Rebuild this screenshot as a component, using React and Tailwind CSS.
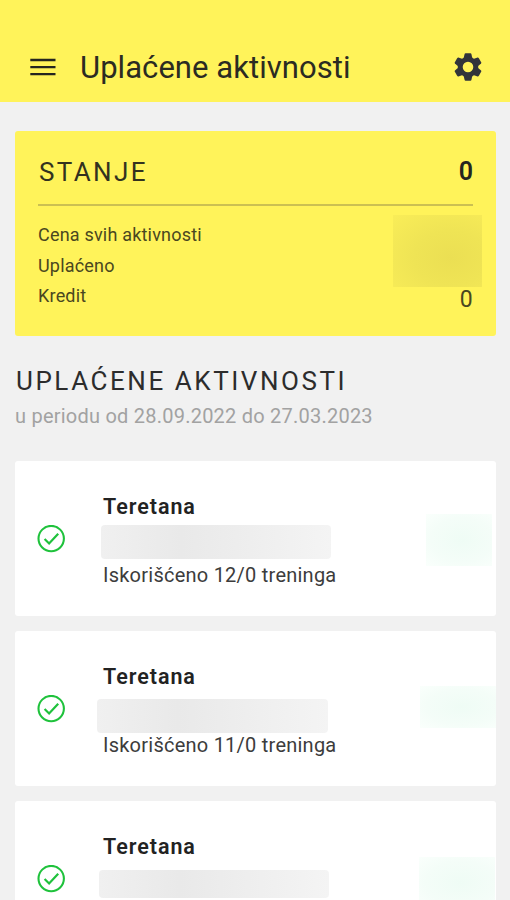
import React from 'react';

const activities = [
  {
    id: 1,
    name: 'Teretana',
    used: 'Iskorišćeno 12/0 treninga',
    mask: 'left-[86px] top-[64px] h-[34px] w-[230px]',
    price: 'left-[411px] top-[53px] h-[52px] w-[66px]',
  },
  {
    id: 2,
    name: 'Teretana',
    used: 'Iskorišćeno 11/0 treninga',
    mask: 'left-[82px] top-[68px] h-[34px] w-[231px]',
    price: 'left-[405px] top-[55px] h-[42px] w-[76px]',
  },
  {
    id: 3,
    name: 'Teretana',
    used: '',
    mask: 'left-[84px] top-[69px] h-[28px] w-[230px]',
    price: 'left-[404px] top-[56px] h-[52px] w-[76px]',
  },
];

const MenuIcon = () => (
  <svg className="h-[18px] w-[26px]" viewBox="0 0 26 18" stroke="#25251f" strokeWidth="2.3">
    <path d="M0.3 2h25.2M0.3 9.1h25.2M0.3 16.2h25.2" />
  </svg>
);

const CheckIcon = () => (
  <svg className="h-7 w-7 shrink-0" viewBox="0 0 28 28" fill="none" stroke="#1fc23c" strokeWidth="2.1">
    <circle cx="14.2" cy="13.6" r="12.7" />
    <path strokeWidth="2.2" d="M7.6 14l4.5 4.5 9.1-9.8" />
  </svg>
);

const GearIcon = () => (
  <svg className="h-7 w-7" viewBox="-14 -14 28 28" fill="#32343a">
    <circle r="7.8" fill="none" stroke="#32343a" strokeWidth="5" />
    {[0, 60, 120, 180, 240, 300].map((angle) => (
      <path
        key={angle}
        transform={`rotate(${angle})`}
        d="M-4.4-8.6L-3.4-13.1Q-3.2-13.8-2.5-13.8H2.5Q3.2-13.8 3.4-13.1L4.4-8.6Z"
      />
    ))}
  </svg>
);

const Header = () => (
  <header className="flex h-[102px] items-end justify-between bg-[#fff35a] pr-7 pl-[30px]">
    <div className="flex h-[70px] items-center">
      <button aria-label="Meni">
        <MenuIcon />
      </button>
      <h1 className="mt-0.5 ml-[24px] text-[31px] leading-9 tracking-[0.05px] text-[#2b2b22]">
        Uplaćene aktivnosti
      </h1>
    </div>
    <button className="flex h-[70px] items-center" aria-label="Podešavanja">
      <GearIcon />
    </button>
  </header>
);

const Balance = () => (
  <section className="relative mt-[29px] h-[205px] rounded-[3px] bg-[#fff35a] px-[23px] text-[#25251f]">
    <div className="flex h-[75px] items-center justify-between border-b-2 border-[#cbc052] pt-[9px]">
      <h2 className="pl-px text-[26px] tracking-[2.4px] text-[#33321f]">STANJE</h2>
      <span className="text-[25px] font-semibold">0</span>
    </div>
    <dl className="mt-[14px] text-[18px] leading-[30.5px] tracking-[0.2px] text-[#4a471f]">
      <dt>Cena svih aktivnosti</dt>
      <dt>Uplaćeno</dt>
      <div className="flex justify-between">
        <dt>Kredit</dt>
        <dd className="pt-1 text-[23px]">0</dd>
      </div>
    </dl>
    {/* Hidden amounts */}
    <div className="absolute top-[84px] left-[378px] h-[72px] w-[89px] bg-[radial-gradient(ellipse_at_65%_60%,#ebdf53_0%,#efe455_45%,#f9ed58_100%)]" />
  </section>
);

const ActivityCard = ({ activity }) => (
  <li className="relative flex h-[155px] items-center rounded-[3px] bg-white pl-[22px]">
    <CheckIcon />
    <div className="mt-[5px] ml-[38px] flex flex-col gap-[44px] text-[20px] leading-6 text-[#222]">
      <h3 className="text-[21.5px] font-semibold tracking-[0.95px]">{activity.name}</h3>
      <p className="h-6 tracking-[0.24px] text-[#3c3c3c]">{activity.used}</p>
    </div>
    {/* Hidden date and price */}
    <div className={`absolute rounded-sm bg-linear-to-r from-[#f0f0f0] via-[#e9e9e9] via-35% to-[#f4f4f4] ${activity.mask}`} />
    <div className={`absolute bg-[radial-gradient(ellipse_at_55%_50%,#effcf5_0%,#f4fdf8_60%,#fafffc_100%)] ${activity.price}`} />
  </li>
);

const App = () => {
  return (
    <div className="h-[900px] w-[510px] overflow-hidden bg-[#f1f1f1] font-['Roboto',sans-serif]">
      <Header />
      <main className="pr-[14px] pl-[15px]">
        <Balance />
        <div className="mt-[29px] h-24">
          <h2 className="pl-px text-[26px] leading-8 tracking-[2.55px] text-[#2c2c2c]">UPLAĆENE AKTIVNOSTI</h2>
          <p className="mt-[7px] text-[20px] leading-6 tracking-[0.23px] text-[#a2a2a2]">
            u periodu od 28.09.2022 do 27.03.2023
          </p>
        </div>
        <ul className="flex flex-col gap-[15px]">
          {activities.map((activity) => (
            <ActivityCard key={activity.id} activity={activity} />
          ))}
        </ul>
      </main>
    </div>
  );
};

export default App;
